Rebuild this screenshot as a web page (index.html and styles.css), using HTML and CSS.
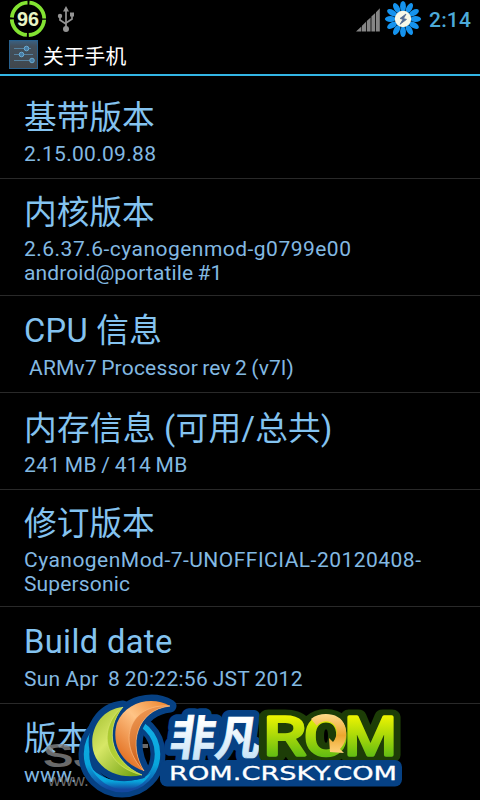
FILE: index.html
```html
<!DOCTYPE html>
<html lang="zh-CN">
<head>
<meta charset="utf-8">
<title>关于手机</title>
<link rel="stylesheet" href="styles.css">
</head>
<body>
<div class="phone">
  <header class="status">
    <svg class="battery" width="38" height="38" viewBox="0 0 38 38">
      <circle cx="19" cy="18.800" r="16.200" fill="none" stroke="#83e332" stroke-width="3.8" stroke-dasharray="23.45 2" stroke-dashoffset="-1"/>
      <text x="19" y="26" text-anchor="middle" textLength="22" lengthAdjust="spacingAndGlyphs">96</text>
    </svg>
    <svg class="usb" width="18" height="28" viewBox="0 0 18 28" fill="none" stroke="#949494" stroke-width="1.7">
      <path d="M9 4v17M9 18L3 14V9M9 17l6-4V8"/>
      <circle cx="9" cy="23" r="3" fill="#949494" stroke="none"/>
      <circle cx="3" cy="10" r="2.2" fill="#949494" stroke="none"/>
      <path d="M13 6.500h4v4h-4zM9 0l3 5.500H6z" fill="#949494" stroke="none"/>
    </svg>
    <svg class="signal" width="24" height="24" viewBox="0 0 24 24" fill="#858585">
      <path d="M0 23.5L5.400 18.400v5.100zM6 17.800l4-4v9.7H6zM10.800 13l3.800-3.500v14h-3.800zM15.4 8.6l3.800-3.500v18.4h-3.800zM20 4.200L23.8.3v23.2H20z"/>
    </svg>
    <svg class="flower" width="38" height="38" viewBox="-19 -19 38 38">
      <defs><ellipse id="petal" cx="0" cy="-12.6" rx="2.900" ry="5.500"/></defs>
      <g fill="#1593ee">
        <use href="#petal"/><use href="#petal" transform="rotate(30)"/><use href="#petal" transform="rotate(60)"/><use href="#petal" transform="rotate(90)"/><use href="#petal" transform="rotate(120)"/><use href="#petal" transform="rotate(150)"/><use href="#petal" transform="rotate(180)"/><use href="#petal" transform="rotate(210)"/><use href="#petal" transform="rotate(240)"/><use href="#petal" transform="rotate(270)"/><use href="#petal" transform="rotate(300)"/><use href="#petal" transform="rotate(330)"/>
      </g>
      <circle r="8.2" fill="#f7f8e8"/>
      <path d="M3-5l-6 4.5 3 .8-3 5 6.500-4.900-3-.9z" fill="#526b92" stroke="#526b92" stroke-width=".8"/>
    </svg>
    <span class="clock">2:14</span>
  </header>
  <div class="titlebar">
    <svg width="29" height="29" viewBox="0 0 29 29">
      <defs><linearGradient id="tile" x2="0" y2="1"><stop stop-color="#3a6183"/><stop offset=".2" stop-color="#42505d"/><stop offset="1" stop-color="#41474c"/></linearGradient></defs>
      <rect x=".5" y=".5" width="28" height="28" fill="url(#tile)" stroke="#28618e"/>
      <path d="M5 8.500h17M5 14.500h19M5 20.500h19" stroke="#55819f" stroke-width="1"/>
      <g fill="#477da5" stroke="#69add5"><circle cx="17.500" cy="8.500" r="2.300"/><circle cx="12.500" cy="14.500" r="2.300"/><circle cx="23" cy="20.500" r="2.300"/></g>
    </svg>
    <h1>关于手机</h1>
  </div>
  <main class="list">
    <section class="row"><h2>基带版本</h2><p>2.15.00.09.88</p></section>
    <section class="row tall"><h2>内核版本</h2><p><span class="wide">2.6.37.6-cyanogenmod-g0799e00</span><br><span class="tight">android@portatile #1</span></p></section>
    <section class="row raised"><h2 class="mixed">CPU 信息</h2><p class="indent">ARMv7 Processor rev 2 (v7l)</p></section>
    <section class="row"><h2 class="mixed">内存信息 (可用/总共)</h2><p class="memory">241 MB / 414 MB</p></section>
    <section class="row tall"><h2>修订版本</h2><p><span class="wide">CyanogenMod-7-UNOFFICIAL-20120408-</span><br><span class="name">Supersonic</span></p></section>
    <section class="row raised"><h2 class="latin">Build date</h2><p class="date">Sun Apr&nbsp; 8 20:22:56 JST 2012</p></section>
    <section class="row last"><h2>版本</h2><p>www.</p></section>
  </main>
  <svg class="logo" width="380" height="112" viewBox="40 690 380 112">
    <defs>
      <linearGradient id="ring" x2="0" y2="1"><stop stop-color="#12afe6"/><stop offset=".65" stop-color="#08a5dc"/><stop offset="1" stop-color="#1348a0"/></linearGradient>
      <linearGradient id="leaf" x2=".8" y2="1"><stop stop-color="#9fbd2c"/><stop offset=".45" stop-color="#d7e766"/><stop offset="1" stop-color="#79a817"/></linearGradient>
      <linearGradient id="leaf2" x2=".7" y2="1"><stop stop-color="#a9c832"/><stop offset="1" stop-color="#b4d334"/></linearGradient>
      <linearGradient id="flame" x1="1" x2=".2" y2="1"><stop stop-color="#ed8128"/><stop offset=".45" stop-color="#ffc486"/><stop offset="1" stop-color="#df6515"/></linearGradient>
      <linearGradient id="flame2" x2=".3" y2="1"><stop stop-color="#f2a05b"/><stop offset="1" stop-color="#c95812"/></linearGradient>
      <linearGradient id="lime" gradientUnits="userSpaceOnUse" x1="0" x2="0" y1="715" y2="756"><stop stop-color="#f0f500"/><stop offset="1" stop-color="#64bd12"/></linearGradient>
      <linearGradient id="ice" x2="0" y2="1"><stop offset=".3" stop-color="#fff"/><stop offset="1" stop-color="#b9ddf5"/></linearGradient>
      <linearGradient id="arrow" x2="0" y2="1"><stop stop-color="#ffda8a"/><stop offset=".55" stop-color="#eda72e"/><stop offset="1" stop-color="#ffd27a"/></linearGradient>
    </defs>
    <g class="watermark">
      <text x="43" y="767" font-size="33" textLength="56" lengthAdjust="spacingAndGlyphs">SJ</text>
      <path d="M138 744h10v4h-10z"/>
      <text x="48" y="786" font-size="17" font-weight="400">www.</text>
    </g>
    <g fill="none" stroke="#064184" stroke-linejoin="round">
      <circle cx="122" cy="754" r="36" stroke-width="15"/>
      <g stroke-width="13" fill="#064184">
        <path d="M123 707C101 709 89 730 93 750C98 771 121 780 142 775C112 762 103 731 123 707Z"/>
        <path d="M170 706C153 696 126 701 117 723C111 744 121 763 144 771C128 746 136 710 170 706Z"/>
      </g>
      <circle cx="122" cy="754" r="35.500" stroke="url(#ring)" stroke-width="5.500"/>
      <path d="M90 766C101 782 132 787 151 773C136 799 102 792 90 766Z" fill="url(#ring)" stroke="none"/>
      <g stroke-width="7">
        <path d="M123 707C101 709 89 730 93 750C98 771 121 780 142 775C112 762 103 731 123 707Z"/>
        <path d="M170 706C153 696 126 701 117 723C111 744 121 763 144 771C128 746 136 710 170 706Z"/>
      </g>
    </g>
    <path d="M123 707C101 709 89 730 93 750C98 771 121 780 142 775C112 762 103 731 123 707Z" fill="url(#leaf)"/>
    <path d="M123 707C99 725 100 765 142 775C112 762 103 731 123 707Z" fill="url(#leaf2)" stroke="#dcea74" stroke-width=".6"/>
    <path d="M170 706C153 696 126 701 117 723C111 744 121 763 144 771C128 746 136 710 170 706Z" fill="url(#flame)"/>
    <path d="M170 706C129 703 116 743 144 771C128 746 136 710 170 706Z" fill="url(#flame2)" stroke="#ffc28a" stroke-width=".6"/>
    <g class="brand" transform="translate(168 755) skewX(-8)">
      <text class="edge" x="0" y="0" font-size="47" textLength="91" lengthAdjust="spacingAndGlyphs">非凡</text>
      <text x="0" y="0" font-size="47" textLength="91" lengthAdjust="spacingAndGlyphs" fill="url(#ice)">非凡</text>
    </g>
    <g class="rom">
      <g class="rom-edge"><text x="263.500" y="754.500" textLength="42" lengthAdjust="spacingAndGlyphs">R</text><text x="304" y="754.500" textLength="44" lengthAdjust="spacingAndGlyphs">O</text><text x="344.500" y="754.500" textLength="52" lengthAdjust="spacingAndGlyphs">M</text></g>
    </g>
    <rect x="160" y="760" width="242" height="26.500" rx="7" fill="#064184"/>
    <g class="rom">
      <g class="rom-face"><text x="263.500" y="754.500" textLength="42" lengthAdjust="spacingAndGlyphs">R</text><text x="304" y="754.500" textLength="44" lengthAdjust="spacingAndGlyphs">O</text><text x="344.500" y="754.500" textLength="52" lengthAdjust="spacingAndGlyphs">M</text></g>
    </g>
    <path d="M311 719C320 711 341 712 345 726C348 736 345 744 340 749L344 753L330 752L329 738L333 742C338 736 338 727 332 723C326 719 318 723 317 726Z" fill="url(#arrow)"/>
    <text class="url" x="169" y="780" textLength="228" lengthAdjust="spacingAndGlyphs">ROM.CRSKY.COM</text>
  </svg>
</div>
</body>
</html>
```
FILE: styles.css
```css
* { box-sizing: border-box; }
body { margin: 0; background: #000; }
.phone {
  position: relative;
  width: 480px;
  height: 800px;
  overflow: hidden;
  background: #000;
  font-family: Roboto, "Noto Sans CJK SC", sans-serif;
}
.status {
  display: flex;
  align-items: center;
  height: 38px;
  padding: 0 9px;
}
.battery text { font: 700 20px "Liberation Sans", sans-serif; fill: #e9f4c5; }
.usb { margin: 2px 0 0 10px; }
.signal { margin: 1px 0 0 auto; }
.flower { margin-left: 4px; }
.clock {
  width: 42px;
  margin: 2px 0 0 7px;
  color: #4caad9;
  font-size: 21px;
  font-weight: 500;
  line-height: 38px;
  letter-spacing: .2px;
}
.titlebar {
  display: flex;
  align-items: center;
  gap: 5px;
  height: 38px;
  padding: 0 9px 4px;
  border-bottom: 2px solid #33b5e5;
}
.titlebar h1 {
  margin: 5px 0 0;
  color: #fff;
  font-size: 20.8px;
  font-weight: 400;
  line-height: 28px;
}
.list { padding-top: 5px; color: #84c3f0; }
.row {
  height: 97px;
  padding: 14px 24px 0;
  border-bottom: 1px solid #292929;
}
.row:first-child { height: 98px; padding-top: 15px; }
.row.tall { height: 117px; padding-top: 12px; }
.row.raised { padding-top: 13px; }
.row.last { padding-top: 13px; border-bottom: 0; }
.row h2 {
  margin: 0;
  font-size: 32.7px;
  font-weight: 400;
  line-height: 44px;
  white-space: nowrap;
}
.row .mixed { letter-spacing: .25px; }
.row .latin { letter-spacing: .35px; }
.row p {
  margin: 2px 0 0;
  color: #83b9e2;
  font-size: 21px;
  line-height: 24px;
  letter-spacing: .3px;
  white-space: nowrap;
}
.row.raised p { margin-top: 3px; }
.row .indent { padding-left: 5px; letter-spacing: .2px; word-spacing: -1.2px; }
.row .memory { letter-spacing: .35px; word-spacing: -1.2px; }
.row .date { letter-spacing: .28px; word-spacing: -.8px; }
.wide { letter-spacing: .48px; }
.tight { letter-spacing: .1px; word-spacing: -1px; }
.name { letter-spacing: .15px; }
.logo { position: absolute; left: 40px; top: 690px; }
.watermark { font-family: "Liberation Sans", sans-serif; font-weight: 700; fill: #858585; opacity: .8; }
.brand { font-family: "Noto Sans CJK SC", sans-serif; font-weight: 700; }
.brand text { stroke: url(#ice); stroke-width: .8px; }
.brand .edge { fill: #064184; stroke: #064184; stroke-width: 14px; stroke-linejoin: round; }
.rom { font: 500 53px Roboto, sans-serif; stroke-linejoin: round; }
.rom-edge { fill: #1d3d07; stroke: #1d3d07; stroke-width: 15px; }
.rom-face { font-weight: 400; fill: url(#lime); stroke: url(#lime); stroke-width: 3.6px; }
.url { font: 400 19px "DejaVu Sans", sans-serif; fill: #fff; stroke: #fff; stroke-width: .3px; }
```
